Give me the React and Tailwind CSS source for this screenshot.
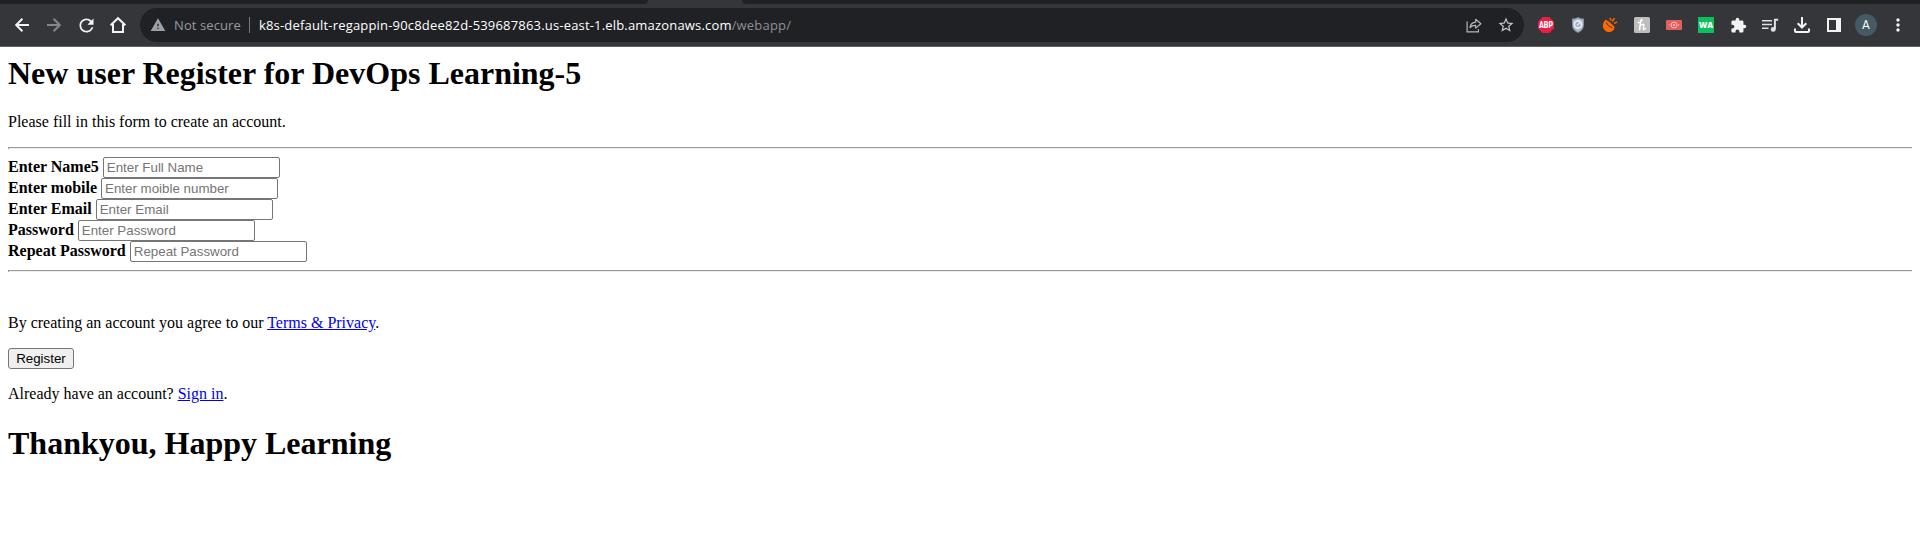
import {
  MdRefresh,
  MdWarning,
  MdStarOutline,
  MdExtension,
  MdMoreVert,
} from "react-icons/md";

function Cell({ children }) {
  return <div className="flex h-8 w-8 shrink-0 items-center justify-center">{children}</div>;
}

function BackIcon() {
  return (
    <svg width="14" height="14" viewBox="0 0 14 14" fill="none" stroke="#f1f3f4" strokeWidth="2">
      <path d="M14 7H1.6M7.4.7 1.2 7l6.2 6.3" />
    </svg>
  );
}

function ForwardIcon() {
  return (
    <svg width="14" height="14" viewBox="0 0 14 14" fill="none" stroke="#85868a" strokeWidth="2">
      <path d="M0 7h12.4M6.6.7 12.8 7l-6.2 6.3" />
    </svg>
  );
}

function HomeIcon() {
  return (
    <svg width="18" height="18" viewBox="0 0 18 18" fill="none" stroke="#f1f3f4" strokeWidth="2">
      <path d="M1.6 9.2 9 2.2l7.4 7M4 8v8h10V8" />
    </svg>
  );
}

function ShareIcon() {
  return (
    <svg width="16" height="16" viewBox="0 0 16 16" fill="none" stroke="#b4b7bb" strokeWidth="1.2">
      <path d="M1.1 4.5v10.4h11.3v-2.6" />
      <path d="M4 10.6c.4-3.4 2.4-5.3 5.7-5.5V2.3l5.2 4.4-5.2 4.4V8.4C7.2 8.3 5.4 9 4 10.6z" strokeLinejoin="round" />
    </svg>
  );
}

function AdblockIcon() {
  return (
    <svg width="16" height="16" viewBox="0 0 16 16" className="overflow-visible">
      <path d="M4.7 0h6.6L16 4.7v6.6L11.3 16H4.7L0 11.3V4.7z" fill="#ed1e45" />
      <text x="8" y="11" textAnchor="middle" textLength="14" lengthAdjust="spacingAndGlyphs" fontSize="8.5" fontWeight="900" fontFamily="Roboto, sans-serif" fill="#fff">
        ABP
      </text>
    </svg>
  );
}

function ShieldIcon() {
  return (
    <svg width="16" height="16" viewBox="0 0 16 16">
      <path d="M8 0c1.8 1.2 3.8 1.6 6 1.6V8c0 3.8-2.4 6.4-6 8-3.6-1.6-6-4.2-6-8V1.6C4.2 1.6 6.2 1.2 8 0z" fill="#8390a3" />
      <path d="M8 1.3c1.5.9 3.2 1.3 4.9 1.4V8c0 3.2-1.9 5.3-4.9 6.8C5 13.3 3.1 11.2 3.1 8V2.7C4.8 2.6 6.5 2.2 8 1.3z" fill="#b4bfcd" />
      <circle cx="8" cy="7.6" r="3.5" fill="#9dabbf" stroke="#f0f3f7" strokeWidth="1.5" />
      <path d="m7 8.6 3.8-3.8" stroke="#e6ebf2" strokeWidth="1.4" />
    </svg>
  );
}

function OrangeIcon() {
  return (
    <svg width="16" height="16" viewBox="0 0 16 16" fill="none" stroke="#ff6a00">
      <path d="M3.4 2.9C.8 5.3.2 9.3 2 12.3c2 3.3 6.4 3.7 9 1.2 1.1-1.1 1.6-2.3 1.5-3.3-.1-1.4-8-7.9-9.1-7.3z" fill="#ff6a00" stroke="none" />
      <path d="M4.4 5.2c.4 2.4 3.2 5 6 5.3" stroke="#35363a" strokeWidth="1" />
      <path d="M8 1 9 3.6M12.4 1.2l-2.1 3.3M12 6.3l3.2-1.2" strokeWidth="1.5" />
    </svg>
  );
}

function HoneyIcon() {
  return (
    <svg width="16" height="16" viewBox="0 0 16 16">
      <rect width="16" height="16" rx="1.5" fill="#bdbdbd" />
      <path d="M4.3 5.6C5.8 5.4 8 4.3 7.9 3 7.7 1.9 6.7 3.2 6.5 5L5.6 12.8M6.2 9.3c1-1.9 3.8-2.8 3.7-.9l-.5 3c-.1 1.5 1.2 1.3 2.1.2" fill="none" stroke="#fff" strokeWidth="1.5" strokeLinecap="round" />
    </svg>
  );
}

function RedIcon() {
  return (
    <svg width="16" height="16" viewBox="0 0 16 16">
      <rect y="3" width="16" height="10" rx="1" fill="#e0605e" />
      <circle cx="8" cy="8" r="2.9" fill="none" stroke="#f3c0bf" strokeWidth="1" />
      <circle cx="8" cy="8" r="1" fill="#f3c0bf" />
      <path d="M2.8 8h1.3M11.9 8h1.3" stroke="#f3c0bf" />
    </svg>
  );
}

function QueueIcon() {
  return (
    <svg width="18" height="16" viewBox="0 0 18 16" fill="none" stroke="#dfe1e5" strokeWidth="1.5">
      <path d="M1 3.7h10M1 7.5h10M1 11.3h6.5" />
      <path d="M13.9 12V2.7h3.3" strokeWidth="2" />
      <ellipse cx="12.2" cy="12.4" rx="2.5" ry="2.3" fill="#dfe1e5" stroke="none" />
    </svg>
  );
}

function DownloadIcon() {
  return (
    <svg width="16" height="16" viewBox="0 0 16 16" fill="none" stroke="#f1f3f4" strokeWidth="2">
      <path d="M8 0v10M3.7 6.2 8 10.5l4.3-4.3M1 11.5V14c0 .6.4 1 1 1h12c.6 0 1-.4 1-1v-2.5" />
    </svg>
  );
}

function PanelIcon() {
  return (
    <svg width="14" height="14" viewBox="0 0 14 14">
      <path d="M0 0h14v14H0zM2 2v10h7V2z" fill="#f1f3f4" fillRule="evenodd" />
    </svg>
  );
}

function BrowserBar() {
  return (
    <header>
      <div className="flex h-1 bg-[#35363a]">
        <div className="w-[648px] rounded-br-[4px] bg-[#202124]" />
        <div className="w-[94px]" />
        <div className="flex-1 rounded-bl-[4px] bg-[#202124]" />
      </div>
      <div className="flex h-[43px] items-center border-b border-[#5f6064] bg-[#35363a] px-1.5 text-[#f1f3f4]">
        <Cell><BackIcon /></Cell>
        <Cell><ForwardIcon /></Cell>
        <Cell><MdRefresh size={21} /></Cell>
        <Cell><HomeIcon /></Cell>
        <div className="ml-1.5 mr-1.5 flex h-[34px] flex-1 items-center rounded-full bg-[#202124] pl-2.5 pr-0.5 font-['Open_Sans',sans-serif] text-[13px] leading-[18px]">
          <MdWarning size={16} className="shrink-0 text-[#9aa0a6]" />
          <span className="ml-2 w-[75px] whitespace-nowrap tracking-[0.1px] text-[#969ba1]">Not secure</span>
          <span className="h-4 w-px bg-[#76787c]" />
          <span className="ml-[9px] flex-1 whitespace-nowrap tracking-[0.18px] text-white">
            k8s-default-regappin-90c8dee82d-539687863.us-east-1.elb.amazonaws.com
            <span className="text-[#8d9196]">/webapp/</span>
          </span>
          <Cell><ShareIcon /></Cell>
          <Cell><MdStarOutline size={18} className="text-[#c4c7cb]" /></Cell>
        </div>
        <Cell><AdblockIcon /></Cell>
        <Cell><ShieldIcon /></Cell>
        <Cell><OrangeIcon /></Cell>
        <Cell><HoneyIcon /></Cell>
        <Cell><RedIcon /></Cell>
        <Cell>
          <span className="flex h-4 w-4 items-center justify-center bg-[#0ac15c] font-['Open_Sans',sans-serif] text-[8px] leading-none font-extrabold text-white">WA</span>
        </Cell>
        <Cell><MdExtension size={17} /></Cell>
        <Cell><QueueIcon /></Cell>
        <Cell><DownloadIcon /></Cell>
        <Cell><PanelIcon /></Cell>
        <Cell>
          <span className="flex h-[22px] w-[22px] items-center justify-center rounded-full bg-[#455a64] font-[Roboto,sans-serif] text-[12px] leading-none text-white">A</span>
        </Cell>
        <Cell><MdMoreVert size={20} /></Cell>
      </div>
    </header>
  );
}

function Field({ label, placeholder, type = "text" }) {
  return (
    <div className="flex h-[21px] items-baseline gap-1">
      <label className="font-bold">{label}</label>
      <input
        type={type}
        placeholder={placeholder}
        className="h-[21px] w-[177px] rounded-[2px] border border-[#767676] bg-white px-[3px] font-['Liberation_Sans',Arial,sans-serif] text-[13.333px] leading-[normal] placeholder:text-[#757575]"
      />
    </div>
  );
}

function Rule() {
  return <hr className="h-0.5 border-0 border-t border-l border-[#9a9a9a] bg-[#eeeeee]" />;
}

export default function App() {
  return (
    <div className="min-h-[533px] bg-white">
      <BrowserBar />
      <main className="p-2 font-['Liberation_Serif','Times_New_Roman',serif] text-[16px] leading-[normal] text-black">
        <h1 className="mb-[21px] text-[32px] leading-[37px] font-bold">New user Register for DevOps Learning-5</h1>
        <p className="mb-4 leading-[18px]">Please fill in this form to create an account.</p>
        <Rule />
        <form className="my-2">
          <Field label="Enter Name5" placeholder="Enter Full Name" />
          <Field label="Enter mobile" placeholder="Enter moible number" />
          <Field label="Enter Email" placeholder="Enter Email" />
          <Field label="Password" placeholder="Enter Password" type="password" />
          <Field label="Repeat Password" placeholder="Repeat Password" type="password" />
        </form>
        <Rule />
        <p className="mt-[42px] mb-4 leading-[18px]">
          By creating an account you agree to our <a href="#" className="text-[#0000ee] underline">Terms &amp; Privacy</a>.
        </p>
        <button className="block h-[21px] w-[66px] rounded-[3px] border border-[#767676] bg-[#efefef] text-center font-['Liberation_Sans',Arial,sans-serif] text-[13.333px] leading-[normal]">
          Register
        </button>
        <p className="mt-4 leading-[18px]">
          Already have an account? <a href="#" className="text-[#0000ee] underline">Sign in</a>.
        </p>
        <h1 className="mt-[22px] text-[32px] leading-[37px] font-bold">Thankyou, Happy Learning</h1>
      </main>
    </div>
  );
}
